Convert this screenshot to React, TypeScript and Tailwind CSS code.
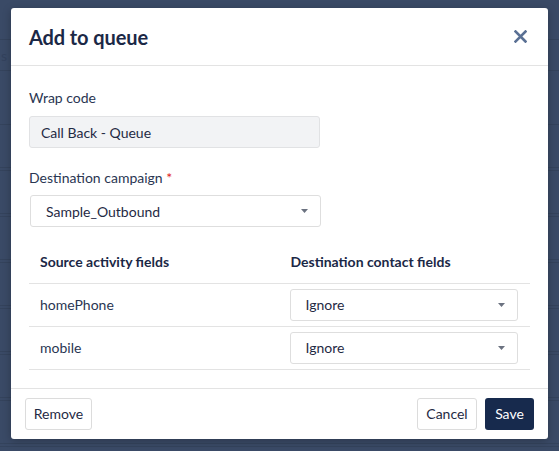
import React from 'react';

const Caret: React.FC = () => (
  <svg width="7" height="4" viewBox="0 0 7 4" className="shrink-0">
    <path d="M0 0h7L3.5 4z" fill="#6b7280" />
  </svg>
);

const SelectBox: React.FC<{ value: string; className?: string }> = ({ value, className = '' }) => (
  <div className={`flex items-center justify-between h-[32px] bg-white border border-[#dedede] rounded-[3px] pl-[15px] pr-[12px] ${className}`}>
    <span className="text-[14px] text-[#1f2a44]">{value}</span>
    <Caret />
  </div>
);

const rows = ['homePhone', 'mobile'];

const App: React.FC = () => {
  return (
    <div className="relative w-[559px] h-[451px] overflow-hidden bg-[#3a4a66] font-['Lato','Liberation_Sans',sans-serif]">
      {/* page behind the overlay */}
      <div className="h-[40px] border-b border-[#34435c]" />
      <div className="h-[31px] flex items-center border-b border-[#34435c] pl-[1px]">
        <span className="text-[14px] text-[#33425d]">s</span>
      </div>
      <div className="h-[54px] border-b border-[#34435c]" />
      {[0, 1, 2, 3, 4, 5, 6, 7].map((i) => (
        <div key={i} className="h-[46px] border-b-[4px] border-double border-[#34435c]" />
      ))}

      {/* modal */}
      <div className="absolute left-[11px] top-[8px] w-[537px] bg-white rounded-[3px] shadow-[0_2px_8px_rgba(0,0,0,0.25)] text-[#1f2a44]">
        <div className="h-[58px] flex items-center justify-between pl-[18px] pr-[21px] border-b border-[#e3e3e3]">
          <h2 className="text-[20px] font-bold text-[#1b2846] tracking-[-0.1px]">Add to queue</h2>
          <svg width="13" height="13" viewBox="0 0 13 13" className="mt-[-1px]">
            <path d="M1.5 1.5l10 10M11.5 1.5l-10 10" stroke="#5a7094" strokeWidth="2.6" strokeLinecap="square" />
          </svg>
        </div>

        <div className="px-[18px] pt-[22px] pb-[18px]">
          <label className="block text-[14px] leading-[20px] text-[#2a3652] mb-[8px]">Wrap code</label>
          <div className="w-[291px] h-[32px] flex items-center bg-[#f2f3f5] border border-[#e1e2e4] rounded-[3px] px-[11px] text-[14px] text-[#1f2a44]">
            Call Back - Queue
          </div>

          <label className="block text-[14px] leading-[20px] text-[#2a3652] mt-[20px] mb-[7px]">
            Destination campaign <span className="text-[#e02424]">*</span>
          </label>
          <SelectBox value="Sample_Outbound" className="w-[291px] ml-[1px]" />

          <table className="w-full mt-[14px] border-collapse">
            <thead>
              <tr className="border-b border-[#e3e3e3]">
                <th className="w-1/2 h-[42px] text-left px-[11px] text-[14px] font-bold text-[#1b2846]">Source activity fields</th>
                <th className="w-1/2 h-[42px] text-left px-[11px] text-[14px] font-bold text-[#1b2846]">Destination contact fields</th>
              </tr>
            </thead>
            <tbody>
              {rows.map((r) => (
                <tr key={r} className="border-b border-[#e3e3e3]">
                  <td className="h-[43px] px-[11px] text-[14px] text-[#2a3652]">{r}</td>
                  <td className="h-[43px] px-[10px]">
                    <SelectBox value="Ignore" className="w-[228px]" />
                  </td>
                </tr>
              ))}
            </tbody>
          </table>
        </div>

        <div className="flex items-center justify-between border-t border-[#e3e3e3] px-[14px] py-[9px]">
          <button className="h-[32px] w-[67px] border border-[#dcdcdc] rounded-[3px] bg-white text-[14px] text-[#1f2a44]">Remove</button>
          <div className="flex gap-[8px]">
            <button className="h-[32px] w-[60px] border border-[#dcdcdc] rounded-[3px] bg-white text-[14px] text-[#1f2a44]">Cancel</button>
            <button className="h-[32px] w-[49px] rounded-[3px] bg-[#172a4d] text-[14px] text-white">Save</button>
          </div>
        </div>
      </div>
    </div>
  );
};

export default App;
